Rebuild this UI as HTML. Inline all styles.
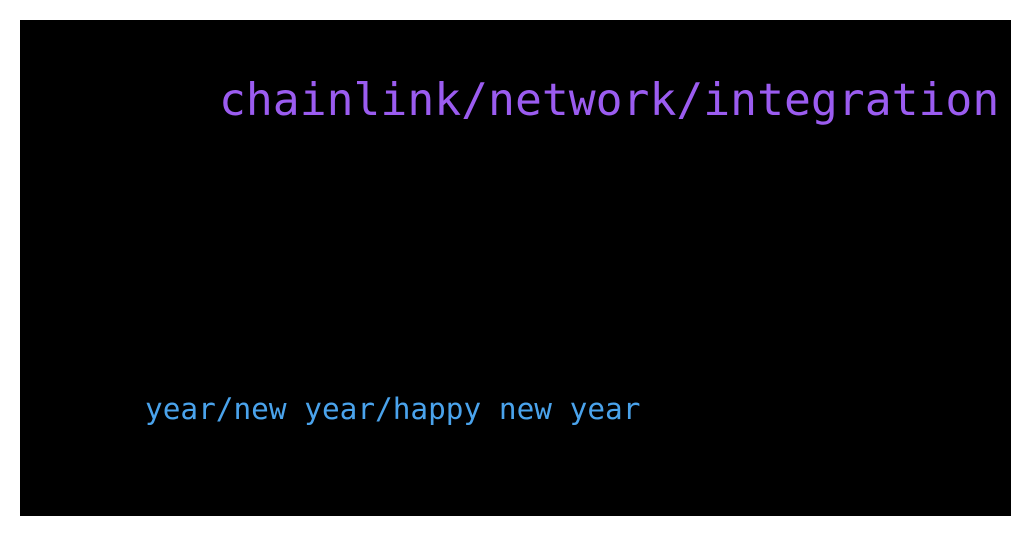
<!DOCTYPE html>
<html><head><style>
html,body{margin:0;padding:0;background:#fff;width:1031px;height:536px;overflow:hidden}
svg{display:block}
</style></head><body>
<svg width="1031" height="536" xmlns="http://www.w3.org/2000/svg">
<rect x="20" y="20" width="991" height="496" fill="#000"/>
<text x="219" y="115" font-family="DejaVu Sans Mono, monospace" font-size="44.7" fill="#9b5cf0">chainlink/network/integration</text>
<text x="145" y="419" font-family="DejaVu Sans Mono, monospace" font-size="29.4" fill="#4aa3ec">year/new year/happy new year</text>
</svg>
</body></html>
